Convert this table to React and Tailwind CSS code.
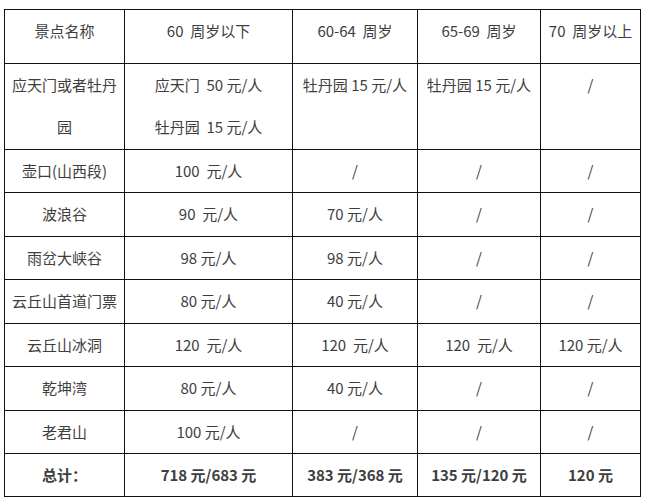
import React from 'react'

const rows = [
    ["壶口(山西段)", "100\u00a0\u00a0元/人", "/", "/", "/"],
    ["波浪谷", "90\u00a0\u00a0元/人", "70 元/人", "/", "/"],
    ["雨岔大峡谷", "98 元/人", "98 元/人", "/", "/"],
    ["云丘山首道门票", "80 元/人", "40 元/人", "/", "/"],
    ["云丘山冰洞", "120\u00a0\u00a0元/人", "120\u00a0\u00a0元/人", "120\u00a0\u00a0元/人", "120 元/人"],
    ["乾坤湾", "80 元/人", "40 元/人", "/", "/"],
    ["老君山", "100 元/人", "/", "/", "/"],
]

const heights = ["h-[43px]", "h-[44px]", "h-[43px]", "h-[44px]", "h-[43px]", "h-[44px]", "h-[43px]"]

function Cell({ children, bold }) {
    return (
        <td className={"border border-[#111] text-center align-top leading-[42px] p-0 " + (bold ? "font-bold" : "")}>
            {children}
        </td>
    )
}

function App() {
    return (
        <div className="w-[648px] h-[498px] bg-white pt-[9px] pl-[4px] overflow-hidden">
            <table
                className="border-collapse table-fixed w-[636px] text-[15px] text-[#3e3e3e]"
                style={{ fontFamily: '"Noto Sans CJK SC", "Liberation Sans", sans-serif' }}
            >
                <colgroup>
                    <col className="w-[120px]" />
                    <col className="w-[168px]" />
                    <col className="w-[125px]" />
                    <col className="w-[123px]" />
                    <col className="w-[100px]" />
                </colgroup>
                <tbody>
                    <tr className="h-[54px]">
                        <Cell>景点名称</Cell>
                        <Cell>60&nbsp;&nbsp;周岁以下</Cell>
                        <Cell>60-64&nbsp;&nbsp;周岁</Cell>
                        <Cell>65-69&nbsp;&nbsp;周岁</Cell>
                        <Cell>70&nbsp;&nbsp;周岁以上</Cell>
                    </tr>
                    <tr className="h-[86px]">
                        <Cell>应天门或者牡丹<br />园</Cell>
                        <Cell>应天门&nbsp;&nbsp;50 元/人<br />牡丹园&nbsp;&nbsp;15 元/人</Cell>
                        <Cell>牡丹园 15 元/人</Cell>
                        <Cell>牡丹园 15 元/人</Cell>
                        <Cell>/</Cell>
                    </tr>
                    {rows.map((r, i) => (
                        <tr key={i} className={heights[i]}>
                            {r.map((c, j) => <Cell key={j}>{c}</Cell>)}
                        </tr>
                    ))}
                    <tr className="h-[43px]">
                        <Cell bold>总计：</Cell>
                        <Cell bold>718 元/683 元</Cell>
                        <Cell bold>383 元/368 元</Cell>
                        <Cell bold>135 元/120 元</Cell>
                        <Cell bold>120 元</Cell>
                    </tr>
                </tbody>
            </table>
        </div>
    )
}

export default App
